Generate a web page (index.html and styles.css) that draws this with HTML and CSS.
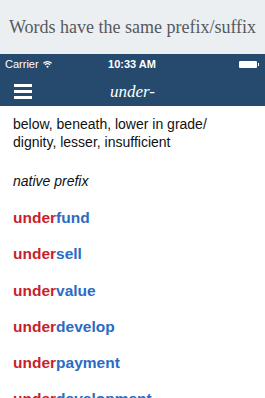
FILE: index.html
```html
<!DOCTYPE html>
<html lang="en">
<head>
    <meta charset="UTF-8">
    <meta name="viewport" content="width=device-width, initial-scale=1.0">
    <title>Prefix</title>
    <link rel="stylesheet" href="styles.css">
</head>
<body>
    <div class="banner">Words have the same prefix/suffix</div>
    <div class="phone">
        <div class="status-bar">
            <div class="carrier">
                Carrier
                <svg class="wifi" width="9" height="7" viewBox="0 0 9 7">
                    <path d="M0.3 2.4 A6 6 0 0 1 8.7 2.4" stroke="#fff" stroke-width="1.2" fill="none"/>
                    <path d="M1.9 3.9 A3.8 3.8 0 0 1 7.1 3.9" stroke="#fff" stroke-width="1.2" fill="none"/>
                    <path d="M4.5 7 L3.2 5.5 A1.8 1.8 0 0 1 5.8 5.5 Z" fill="#fff"/>
                </svg>
            </div>
            <div class="time">10:33 AM</div>
            <div class="battery"><span class="cell"></span><span class="tip"></span></div>
        </div>
        <div class="nav-bar">
            <div class="menu-icon"><span></span><span></span><span></span></div>
            <div class="nav-title">under-</div>
        </div>
    </div>
    <div class="content">
        <p class="meaning">below, beneath, lower in grade/ dignity, lesser, insufficient</p>
        <p class="origin">native prefix</p>
        <ul class="words" id="words"></ul>
    </div>

    <script>
        const words = ['fund', 'sell', 'value', 'develop', 'payment', 'development'];
        const list = document.getElementById('words');
        words.forEach(rest => {
            const li = document.createElement('li');
            li.innerHTML = `<span class="prefix">under</span><span class="rest">${rest}</span>`;
            list.appendChild(li);
        });
    </script>
</body>
</html>
```

FILE: styles.css
```css
* {
    box-sizing: border-box;
    margin: 0;
    padding: 0;
}
body {
    width: 265px;
    height: 398px;
    overflow: hidden;
    background-color: #fff;
    font-family: "Liberation Sans", Arial, sans-serif;
}
.banner {
    height: 54px;
    background-color: #eceff1;
    color: #55595e;
    font-family: "Liberation Serif", "Times New Roman", serif;
    font-size: 18px;
    display: flex;
    align-items: center;
    justify-content: center;
    white-space: nowrap;
}
.phone {
    background-color: #254a6d;
    color: #fff;
}
.status-bar {
    height: 20px;
    display: flex;
    align-items: center;
    justify-content: space-between;
    padding: 0 6px 0 5px;
    font-size: 11px;
}
.carrier {
    flex: 1;
    display: flex;
    align-items: center;
    gap: 4px;
}
.time {
    font-weight: bold;
    font-size: 11px;
}
.battery {
    flex: 1;
    display: flex;
    justify-content: flex-end;
    align-items: center;
}
.battery .cell {
    width: 18px;
    height: 7px;
    background-color: #fff;
    border-radius: 1px;
}
.battery .tip {
    width: 1px;
    height: 3px;
    background-color: #fff;
    margin-left: 1px;
}
.nav-bar {
    height: 32px;
    display: flex;
    align-items: center;
    padding: 0 14px;
    position: relative;
}
.menu-icon {
    width: 18px;
    display: flex;
    flex-direction: column;
    gap: 3px;
    margin-top: 2px;
}
.menu-icon span {
    height: 3px;
    background-color: #fff;
}
.nav-title {
    position: absolute;
    left: 0;
    right: 0;
    text-align: center;
    font-family: "Liberation Serif", "Times New Roman", serif;
    font-style: italic;
    font-size: 17px;
    margin-top: 3px;
    pointer-events: none;
}
.content {
    padding: 9px 13px 0;
    color: #111;
}
.meaning {
    font-size: 14px;
    line-height: 18px;
    width: 210px;
}
.origin {
    font-size: 14px;
    font-style: italic;
    margin-top: 22px;
}
.words {
    list-style: none;
    margin-top: 11px;
}
.words li {
    height: 36.3px;
    line-height: 36px;
    font-size: 15.5px;
    font-weight: bold;
}
.prefix {
    color: #c71f2d;
}
.rest {
    color: #2a6bc3;
}
```
